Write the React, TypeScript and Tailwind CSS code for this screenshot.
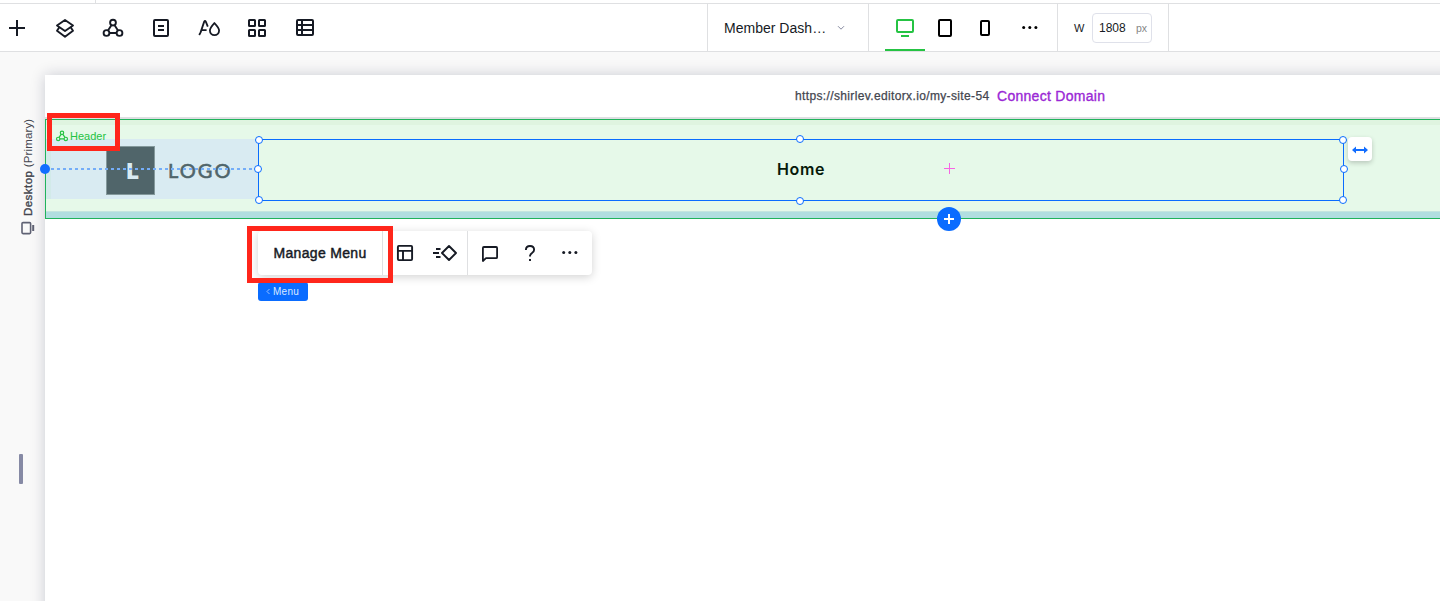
import React from "react";

type IconProps = { children: React.ReactNode; className?: string; sw?: number };

function Icon({ children, className = "", sw = 2 }: IconProps) {
  return (
    <svg
      width="24"
      height="24"
      viewBox="0 0 24 24"
      fill="none"
      stroke="currentColor"
      strokeWidth={sw}
      className={`shrink-0 ${className}`}
    >
      {children}
    </svg>
  );
}

function Dots() {
  return (
    <Icon>
      <g fill="currentColor" stroke="none">
        <circle cx="5.7" cy="11.6" r="1.5" />
        <circle cx="11.8" cy="11.6" r="1.5" />
        <circle cx="17.9" cy="11.6" r="1.5" />
      </g>
    </Icon>
  );
}

function Molecule({ size = 24, sw = 1.9 }: { size?: number; sw?: number }) {
  return (
    <svg width={size} height={size} viewBox="0 0 24 24" fill="none" stroke="currentColor" strokeWidth={sw} className="shrink-0">
      <circle cx="12" cy="6.6" r="2.9" />
      <circle cx="5.5" cy="17" r="2.9" />
      <circle cx="18.5" cy="17" r="2.9" />
      <path d="M10.4 9.2 7 14.4M13.6 9.2 17 14.4M8.4 17h7.2" />
    </svg>
  );
}

const tools = [
  <Icon key="add">
    <path d="M12 4v16M4 12h16" />
  </Icon>,
  <Icon key="layers" sw={1.9}>
    <path strokeLinejoin="round" d="M12 4 20 9.5 12 15 4 9.5ZM6 11.8 4 14.8 12 20.8 20 14.8 18 11.8" />
  </Icon>,
  <Molecule key="masters" />,
  <Icon key="pages">
    <rect x="5" y="4" width="14" height="16" rx="1" />
    <path d="M9 10h6M9 14h6" />
  </Icon>,
  <Icon key="theme" sw={1.8}>
    <path strokeLinejoin="round" d="M2.2 19 3.6 16.4 7.2 5.6Q8 4 8.8 5.6L10.8 10.6M4.6 14.2H9.6" />
    <path d="M17.4 7.2C15 9.8 12.9 12.2 12.9 14.5a4.6 4.6 0 0 0 9.2 0C22.1 12.2 19.9 9.8 17.4 7.2Z" />
  </Icon>,
  <Icon key="apps">
    <rect x="4" y="4" width="6" height="6" rx=".5" />
    <rect x="14" y="4" width="6" height="6" rx=".5" />
    <rect x="4" y="14" width="6" height="6" rx=".5" />
    <rect x="14" y="14" width="6" height="6" rx=".5" />
  </Icon>,
  <Icon key="content">
    <rect x="4" y="4" width="16" height="15" rx="1" />
    <path d="M9 4v15M4 9h16M4 14h16" />
  </Icon>,
];

function TopBar() {
  return (
    <div className="relative z-10 flex h-12 shrink-0 border-b border-[#dfe0e2] bg-white text-[#161a24]">
      <div className="-ml-[7px] flex w-[714px]">
        {tools.map((t, i) => (
          <button key={i} className="flex w-12 justify-center pt-3">
            {t}
          </button>
        ))}
      </div>
      <div className="flex w-[161px] items-center border-l border-[#dfe0e2] pl-4 pt-px">
        <span className="w-[104px] whitespace-nowrap text-[14px] tracking-[0.02px]">Member Dash…</span>
        <svg width="8" height="6" viewBox="0 0 8 6" fill="none" stroke="#868aa0" className="ml-[9px]">
          <path d="M1 1.2 4 4.2 7 1.2" />
        </svg>
      </div>
      <div className="flex w-[189px] border-l border-[#dfe0e2] pl-4 text-black">
        <button className="flex h-[47px] w-10 justify-center border-b-2 border-[#25c343] pt-3 text-[#25c343]">
          <Icon>
            <rect x="4" y="4" width="16" height="12" rx="1" />
            <path d="M8 20h8" />
          </Icon>
        </button>
        <button className="flex w-10 justify-center pt-3">
          <Icon>
            <rect x="6" y="4" width="12" height="16" rx="1" />
          </Icon>
        </button>
        <button className="flex w-10 justify-center pt-3">
          <Icon>
            <rect x="8" y="5" width="8" height="14" rx="1" />
          </Icon>
        </button>
        <button className="ml-[5px] flex w-10 justify-center pt-3">
          <Dots />
        </button>
      </div>
      <div className="flex w-[112px] items-center border-x border-[#dfe0e2] pl-4">
        <span className="w-[18px] pt-[2px] text-[11px]">W</span>
        <div className="flex h-[30px] w-[60px] items-center justify-between rounded border border-[#dfe1ea] pr-1 pl-[6px]">
          <span className="text-[12px]">1808</span>
          <span className="pt-[2px] text-[10.5px] text-[#868686]">px</span>
        </div>
      </div>
    </div>
  );
}

function SideRail() {
  return (
    <div className="flex w-[45px] shrink-0 flex-col items-center pt-[66px]">
      <div className="mr-[-11px] h-[98px] w-4 rotate-180 text-[11.5px] leading-4 whitespace-nowrap text-[#44464f] [writing-mode:vertical-rl]">
        <span className="tracking-[0.45px] [-webkit-text-stroke:0.35px]">Desktop</span>
        <span className="tracking-[0.15px]"> (Primary)</span>
      </div>
      <svg width="14" height="14" viewBox="0 0 14 14" fill="none" stroke="#5f6274" strokeWidth="1.6" className="mt-[5px] ml-[11px]">
        <rect x="1" y="1.6" width="8.6" height="11" rx="1" />
        <path d="M12.2 4v6" strokeWidth="2" />
      </svg>
      <div className="mt-[219px] mr-[3px] h-[30px] w-1 rounded-[1px] bg-[#868aa5]" />
    </div>
  );
}

function Handle({ className }: { className: string }) {
  return (
    <i
      className={`absolute size-2 -translate-x-1/2 -translate-y-1/2 rounded-full border-[1.25px] border-[#0a6cff] bg-white ${className}`}
    />
  );
}

function SiteHeader() {
  return (
    <div className="relative h-[100px] w-full border border-r-0 border-[#21b35c] bg-[#e6f9e9]">
      <div className="flex h-full flex-col">
        <div className="h-[5px] bg-[#dff4e0]" />
        <div className="flex h-[86px] items-center">
          <div className="mt-[2px] flex h-[60px] w-[212px] items-center border-l-[5px] border-[#d2eae9] bg-[#d9ebf2] pl-[55px]">
            <div className="mt-[2px] flex size-[49px] items-center justify-center border border-[#84999c] bg-[#50656a] pt-[1px] pl-[4px] font-['Open_Sans'] text-[23px] leading-none font-extrabold text-[#d9ebf2]">
              L
            </div>
            <span className="ml-[13px] pt-[2px] font-['Lato'] text-[20px] tracking-[2.1px] text-[#50656a] [-webkit-text-stroke:0.6px]">
              LOGO
            </span>
          </div>
          <div className="relative mt-[3px] -mb-px flex h-[62px] w-[1086px] items-center justify-center border border-[#0a6cff]">
            <span className="-mt-[2px] font-['Inter'] text-[16px] font-semibold tracking-[0.6px] text-[#06190a]">Home</span>
            <Handle className="top-0 left-0" />
            <Handle className="top-[29px] left-[-1px]" />
            <Handle className="top-[60px] left-0" />
            <Handle className="top-[-1px] left-[541px]" />
            <Handle className="top-[61px] left-[541px]" />
            <Handle className="top-0 left-[1084px]" />
            <Handle className="top-[29px] left-[1085px]" />
            <Handle className="top-[60px] left-[1084px]" />
          </div>
        </div>
        <div className="h-[7px] border-t border-[#c4e5df] bg-[#b1dee0]" />
      </div>

      {/* alignment guide from the page edge to the selected menu */}
      <div className="absolute top-[48px] left-[5px] h-[1.5px] w-[203px] bg-[repeating-linear-gradient(to_right,#74adf8_0,#74adf8_3px,transparent_3px,transparent_6px)]" />
      <i className="absolute top-[44px] left-[-6px] size-[10px] rounded-full bg-[#116dff]" />

      <svg width="11" height="11" className="absolute top-[43px] left-[898px]" stroke="#f765e4">
        <path d="M5.5 0v11M0 5.5h11" />
      </svg>

      <div className="absolute top-[17px] left-[1302px] flex size-6 items-center justify-center rounded bg-white text-[#116dff] shadow-[0_2px_5px_rgba(0,0,0,0.2)]">
        <svg width="16" height="8" viewBox="0 0 16 8" fill="currentColor" className="mt-[2px]">
          <path d="M4 .5v2.6h8V.5L16 4l-4 3.5V4.9H4v2.6L0 4Z" />
        </svg>
      </div>

      <button className="absolute top-[87px] left-[891px] flex size-6 items-center justify-center rounded-full bg-[#0a6cff]">
        <svg width="10" height="10" stroke="white" strokeWidth="2">
          <path d="M5 0v10M0 5h10" />
        </svg>
      </button>

      <div className="absolute top-[-7px] left-[1px] flex h-[38px] w-[73px] items-center border-[5px] border-[#ff261b] pt-[8px] pl-[3px] text-[#25c343]">
        <Molecule size={14} sw={2} />
        <span className="ml-[1px] text-[11px]">Header</span>
      </div>
    </div>
  );
}

function ElementBar() {
  return (
    <div className="absolute top-[156px] left-[213px]">
      <div className="flex h-11 w-[334px] rounded bg-white text-[#161a24] shadow-[0_2px_10px_rgba(0,0,0,0.18)]">
        <button className="flex w-[124px] items-center justify-center text-[14px] tracking-[0.33px] whitespace-nowrap [-webkit-text-stroke:0.45px]">
          Manage Menu
        </button>
        <div className="flex w-[86px] items-start border-x border-[#dfe0e2] pt-[10px]">
          <Icon className="ml-[10px]" sw={1.9}>
            <rect x="4.9" y="4.9" width="14.2" height="14.2" rx="1" />
            <path d="M5 9.9h14M10 10v9" />
          </Icon>
          <svg width="24" height="24" fill="none" stroke="currentColor" strokeWidth="1.9" className="ml-[16px]">
            <path strokeLinejoin="round" d="M16 5 23 12 16 19 9 12Z" />
            <path d="M3 8h4.5M0 12h6M3 16h4.5" />
          </svg>
        </div>
        <div className="flex items-start pt-[10px]">
          <Icon className="ml-[10px]" sw={1.8}>
            <path strokeLinejoin="round" d="M4.9 20V7Q4.9 6 5.9 6H18.1Q19.1 6 19.1 7V16.2Q19.1 17.2 18.1 17.2H8Z" />
          </Icon>
          <Icon className="ml-4" sw={1.9}>
            <path d="M7.9 9Q7.9 5 12 5T16.1 8.8Q16.1 10.6 14.2 11.8 12 13 12 15.6M12 18v2" />
          </Icon>
          <span className="ml-[16px]">
            <Dots />
          </span>
        </div>
      </div>
      <div className="mt-[7px] flex h-[19px] w-[50px] items-center rounded-[3px] bg-[#0a6cff] pl-[8px] text-[#d8e8ff]">
        <svg width="4" height="7" fill="none" stroke="#a9ccff" strokeWidth="0.9">
          <path d="M3.5 1 1 3.5 3.5 6" />
        </svg>
        <span className="ml-[3px] text-[10px] tracking-[0.25px]">Menu</span>
      </div>
      <div className="absolute top-[-5px] left-[-11px] h-[57px] w-[146px] border-[5px] border-[#ff261b]" />
    </div>
  );
}

export default function App() {
  return (
    <div className="flex h-[601px] w-[1440px] flex-col overflow-hidden bg-[#f9f9f9] font-['Liberation_Sans',sans-serif]">
      <div className="flex h-1 shrink-0 border-b border-[#dfe0e2] bg-white">
        <div className="w-24 border-r border-[#dfe0e2]" />
      </div>
      <TopBar />
      <div className="flex h-[549px]">
        <SideRail />
        <div className="w-[1440px] shrink-0 pt-[23px]">
          <div className="relative h-[570px] bg-white shadow-[0_0_14px_rgba(22,26,60,0.2)]">
            <div className="flex h-[44px] items-center border-b-2 border-[#dedfe2] pl-[750px] whitespace-nowrap text-[#44464f]">
              <span className="w-[202px] text-[12px] tracking-[0.36px] [-webkit-text-stroke:0.25px]">
                https://shirlev.editorx.io/my-site-54
              </span>
              <span className="text-[14px] tracking-[0.28px] text-[#9a27d5] [-webkit-text-stroke:0.35px]">
                Connect Domain
              </span>
            </div>
            <SiteHeader />
            <ElementBar />
          </div>
        </div>
      </div>
    </div>
  );
}
